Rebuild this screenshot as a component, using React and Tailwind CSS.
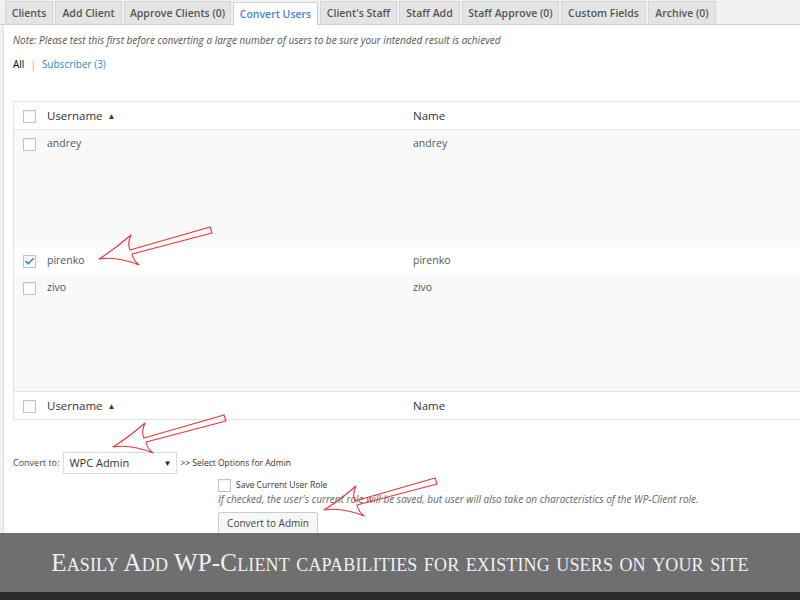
import { Check } from "lucide-react";

const tabs = [
  { label: "Clients", w: "w-[48px]" },
  { label: "Add Client", w: "w-[67px]" },
  { label: "Approve Clients (0)", w: "w-[107px]" },
  { label: "Convert Users", w: "w-[85px]", active: true },
  { label: "Client's Staff", w: "w-[77px]" },
  { label: "Staff Add", w: "w-[61px]" },
  { label: "Staff Approve (0)", w: "w-[97px]" },
  { label: "Custom Fields", w: "w-[85px]" },
  { label: "Archive (0)", w: "w-[68px]" },
];

function Box({ checked }) {
  return (
    <span className="w-[13px] h-[13px] shrink-0 border border-[#c4c4c4] bg-white shadow-[inset_0_1px_2px_rgba(0,0,0,0.08)] flex items-center justify-center">
      {checked && <Check className="w-[11px] h-[11px] text-[#1e8cbe]" strokeWidth={3.5} />}
    </span>
  );
}

function Row({ user, name, className, header }) {
  const txt = header ? "text-[11.5px] text-[#333]" : "text-[10.5px] text-[#555]";
  return (
    <div className={"flex items-start " + className}>
      <div className="w-[33px] pl-[9px] pt-[8px]">
        <Box checked={user === "pirenko"} />
      </div>
      <div className={"w-[366px] " + (header ? "pt-[5px] " : "pt-[6px] ") + txt}>
        {user}
        {header && <span className="ml-[5px] text-[8px] relative -top-[1px]">▲</span>}
      </div>
      <div className={(header ? "pt-[5px] " : "pt-[6px] ") + txt}>{name}</div>
    </div>
  );
}

function Arrow({ x, y }) {
  return (
    <path
      transform={`translate(${x} ${y})`}
      d="M0,0 Q16,-10 32,-24 Q28,-15 31,-9 L111,-32 L113,-26 L33,-5 Q34,1 40,6 Q18,-3 0,0 Z"
      fill="none"
      stroke="#e8333a"
      strokeWidth="1.1"
      strokeLinejoin="round"
    />
  );
}

export default function App() {
  return (
    <div className="relative w-[800px] h-[600px] overflow-hidden bg-[#f1f1f1] flex flex-col" style={{ fontFamily: '"Open Sans", sans-serif' }}>
      {/* Tabs */}
      <div className="h-[25px] shrink-0 flex items-end gap-[2px] pl-[5px] border-b border-[#cfcfcf]">
        {tabs.map((t) => (
          <div
            key={t.label}
            className={
              t.w +
              " h-[23px] pt-[2px] flex items-center justify-center text-[10.5px] font-semibold border border-b-0 " +
              (t.active
                ? "bg-white text-[#3f86d4] border-[#cfcfcf] -mb-px"
                : "bg-[#e4e4e4] text-[#555] border-[#d6d6d6]")
            }
          >
            {t.label}
          </div>
        ))}
      </div>

      {/* Content */}
      <div className="flex-1 ml-[3px] bg-white border-l border-[#dedede] pl-[9px] overflow-hidden">
        <p className="pt-[8px] text-[10px] italic text-[#555] leading-[14px]">
          Note: Please test this first before converting a large number of users to be sure your intended result is achieved
        </p>
        <div className="mt-[10px] text-[10px] leading-[14px]">
          <span className="text-black">All</span>
          <span className="text-[#aaa] mx-[6px]">|</span>
          <span className="text-[#2a8bc0]">Subscriber (3)</span>
        </div>

        {/* Table */}
        <div className="mt-[30px] w-[800px] border border-[#e3e3e3]">
          <Row header user="Username" name="Name" className="h-[28px] border-b border-[#e3e3e3] bg-white" />
          <Row user="andrey" name="andrey" className="h-[117px] bg-[#f9f9f9]" />
          <Row user="pirenko" name="pirenko" className="h-[27px] bg-white" />
          <Row user="zivo" name="zivo" className="h-[117px] bg-[#f9f9f9]" />
          <Row header user="Username" name="Name" className="h-[28px] border-t border-[#e3e3e3] bg-white" />
        </div>

        {/* Convert form */}
        <div className="mt-[32px] flex items-center">
          <span className="text-[9px] text-[#444]">Convert to:</span>
          <div className="ml-[4px] w-[114px] h-[22px] border border-[#dcdcdc] flex items-center justify-between pl-[5px] pr-[5px]">
            <span className="text-[11px] text-[#333]">WPC Admin</span>
            <span className="text-[8px] text-[#222]">▼</span>
          </div>
          <span className="ml-[3px] text-[8.5px] text-[#333]">&gt;&gt; Select Options for Admin</span>
        </div>
        <div className="ml-[205px]">
          <label className="mt-[5px] flex items-center gap-[5px]">
            <Box />
            <span className="text-[8.5px] text-[#333]">Save Current User Role</span>
          </label>
          <p className="text-[10px] italic text-[#666] leading-[14px]">
            If checked, the user's current role will be saved, but user will also take on characteristics of the WP-Client role.
          </p>
          <button className="mt-[6px] w-[100px] h-[23px] bg-[#f7f7f7] border border-[#cccccc] rounded-[2px] text-[10px] text-[#444] shadow-[0_1px_0_#ddd]">
            Convert to Admin
          </button>
        </div>
      </div>

      {/* Banner */}
      <div className="h-[59px] shrink-0 bg-[#6f6f6f] flex items-center justify-center">
        <span className="text-[25px] tracking-[0.15px] text-[#eef0f6]" style={{ fontFamily: '"Liberation Serif", serif', fontVariant: "small-caps" }}>
          Easily Add WP-Client capabilities for existing users on your site
        </span>
      </div>
      <div className="h-[8px] shrink-0 bg-[#2c2c2c]" />

      {/* Arrows */}
      <svg className="absolute inset-0 pointer-events-none" width="800" height="600">
        <Arrow x={99} y={259} />
        <Arrow x={113} y={447} />
        <Arrow x={324} y={510} />
      </svg>
    </div>
  );
}
